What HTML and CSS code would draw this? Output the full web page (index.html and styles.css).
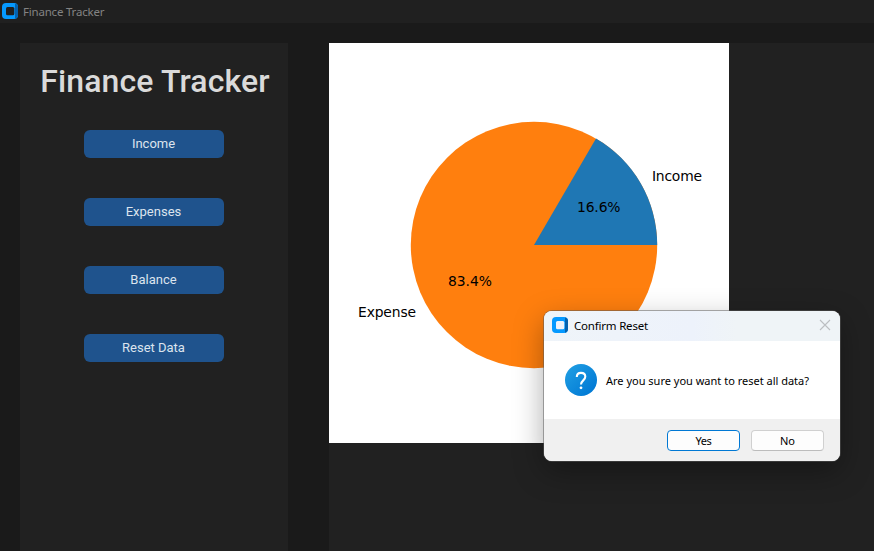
FILE: index.html
```
<!DOCTYPE html>
<html lang="en">
<head>
<meta charset="utf-8">
<title>Finance Tracker</title>
<link rel="stylesheet" href="styles.css">
</head>
<body>
<svg class="defs" aria-hidden="true">
  <symbol id="app-logo" viewBox="0 0 16 16">
    <rect width="16" height="16" rx="4" fill="#0599ff"/>
    <path d="M13 0.500C15 1 16 2.200 16 4v8c0 1.800-1 3.200-3 3.700z" fill="#0561ae"/>
  </symbol>
</svg>
<header class="titlebar">
  <svg class="logo" viewBox="0 0 16 16"><use href="#app-logo"/><rect x="4" y="4" width="8.300" height="8.300" rx="1.500" fill="#202020"/></svg>
  <span class="titlebar-text">Finance Tracker</span>
</header>
<main class="workspace">
  <nav class="sidebar">
    <h1 class="heading">Finance Tracker</h1>
    <button class="action">Income</button>
    <button class="action">Expenses</button>
    <button class="action">Balance</button>
    <button class="action">Reset Data</button>
  </nav>
  <section class="content">
    <svg class="chart" viewBox="0 0 400 400">
      <circle cx="205" cy="202" r="123.2" fill="#ff7f0e"/>
      <path d="M205 202H328.200A123.200 123.200 0 0 0 267 95.500Z" fill="#1f77b4"/>
      <text x="323" y="138" textLength="50">Income</text>
      <text x="248" y="169" textLength="43.500">16.6%</text>
      <text x="119" y="243" textLength="44">83.4%</text>
      <text x="29" y="274" textLength="58">Expense</text>
    </svg>
  </section>
</main>
<div class="dialog" role="dialog">
  <div class="dialog-title">
    <svg class="logo" viewBox="0 0 16 16"><use href="#app-logo"/><rect x="4" y="4" width="8.300" height="8.300" rx="1.500" fill="#f0f3fa"/></svg>
    <span class="dialog-name">Confirm Reset</span>
    <svg class="close" viewBox="0 0 12 12"><path d="M1 1l10 10M11 1L1 11" stroke="#bcbfc2" stroke-width="1.100"/></svg>
  </div>
  <div class="dialog-body">
    <svg class="question" viewBox="0 0 32 32">
      <defs><linearGradient id="blue" x1="0" y1="0" x2="1" y2="1"><stop offset="0.1" stop-color="#1e9ce2"/><stop offset="0.9" stop-color="#0078d4"/></linearGradient></defs>
      <circle cx="16" cy="16" r="16" fill="url(#blue)"/>
      <path d="M11.800 13C11.800 10.200 13.600 8.900 16 8.900s4.300 1.500 4.300 3.900c0 3.500-4.300 3.700-4.300 7.700" fill="none" stroke="#fff" stroke-width="2.100"/>
      <circle cx="16" cy="23.800" r="1.400" fill="#fff"/>
    </svg>
    <span class="message">Are you sure you want to reset all data?</span>
  </div>
  <div class="dialog-actions">
    <button class="choice primary">Yes</button>
    <button class="choice">No</button>
  </div>
</div>
</body>
</html>
```
FILE: styles.css
```
* { box-sizing: border-box; }
body {
  margin: 0;
  height: 551px;
  overflow: hidden;
  display: flex;
  flex-direction: column;
  background: #1a1a1a;
  font-family: "Noto Sans", sans-serif;
}
.defs { position: absolute; width: 0; height: 0; }
.logo { width: 16px; height: 16px; flex: none; }
.titlebar {
  height: 23px;
  flex: none;
  display: flex;
  align-items: center;
  gap: 5px;
  padding: 0 0 1px 2px;
  background: #202020;
  color: #838383;
  font-size: 11.500px;
  letter-spacing: -0.200px;
}
.titlebar-text { line-height: 18px; padding-top: 1px; }
.workspace { flex: 1; display: flex; gap: 41px; padding: 20px 0 0 20px; }
.sidebar {
  width: 268px;
  background: #212121;
  display: flex;
  flex-direction: column;
  align-items: center;
  gap: 40px;
  padding-top: 19px;
}
.heading {
  margin: 0 0 -12px 2px;
  height: 40px;
  font: 500 32px/38px Roboto, sans-serif;
  letter-spacing: 0.120px;
  color: #dadada;
  white-space: nowrap;
}
.action {
  width: 140px;
  height: 28px;
  padding: 0 1px 0 0;
  border: 0;
  border-radius: 6px;
  background: #1f538d;
  color: #dce4ee;
  font: 13px/28px Roboto, sans-serif;
}
.content { flex: 1; background: #212121; }
.chart {
  display: block;
  width: 400px;
  height: 400px;
  background: #fff;
  font: 13.890px "DejaVu Sans", sans-serif;
}
.dialog {
  position: absolute;
  left: 544px;
  top: 311px;
  width: 296px;
  height: 150px;
  display: flex;
  flex-direction: column;
  border-radius: 8px;
  overflow: hidden;
  background: #fff;
  color: #000;
  box-shadow: 0 0 0 1px rgba(90, 90, 90, 0.5), 0 10px 30px rgba(0, 0, 0, 0.34);
}
.dialog-title {
  height: 30px;
  display: flex;
  align-items: center;
  padding: 0 9px 2px 8px;
  background: linear-gradient(90deg, #eff4f9, #edf2fb 50%, #eff4f7 65%);
}
.dialog-name { margin-left: 6px; font-size: 11.500px; letter-spacing: -0.200px; }
.close { width: 12px; height: 12px; margin-left: auto; }
.dialog-body {
  flex: 1;
  display: flex;
  align-items: center;
  gap: 9px;
  padding-left: 21px;
}
.question { width: 32px; height: 32px; flex: none; }
.message { font-size: 11px; white-space: nowrap; }
.dialog-actions {
  height: 42px;
  display: flex;
  justify-content: flex-end;
  gap: 11px;
  padding: 11px 16px 0 0;
  background: #f0f0f0;
}
.choice {
  width: 73px;
  height: 21px;
  padding: 0;
  border: 1px solid #d0d0d0;
  border-bottom-color: #bcbcbc;
  border-radius: 4px;
  background: #fdfdfd;
  color: #000;
  font: 11px/19px "Noto Sans", sans-serif;
}
.choice.primary { border-color: #0078d4; letter-spacing: -0.400px; }
```
